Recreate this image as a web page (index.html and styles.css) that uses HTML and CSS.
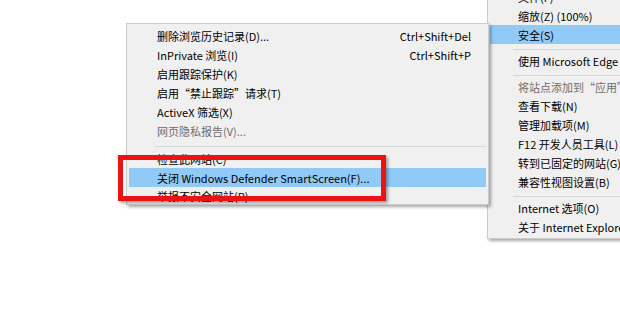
FILE: index.html
```html
<!DOCTYPE html>
<html lang="zh-CN">
<head>
<meta charset="utf-8">
<title>安全菜单</title>
<link rel="stylesheet" href="styles.css">
</head>
<body>
<div class="canvas">
  <div class="menu main-menu">
    <div class="item">文件(F)</div>
    <div class="item">缩放(Z) (100%)</div>
    <div class="item active">安全(S)</div>
    <div class="sep"></div>
    <div class="item">使用 Microsoft Edge 打开(E)</div>
    <div class="sep"></div>
    <div class="item disabled">将站点添加到“应用”视图(I)</div>
    <div class="item">查看下载(N)</div>
    <div class="item">管理加载项(M)</div>
    <div class="item">F12 开发人员工具(L)</div>
    <div class="item">转到已固定的网站(G)</div>
    <div class="item">兼容性视图设置(B)</div>
    <div class="sep"></div>
    <div class="item">Internet 选项(O)</div>
    <div class="item">关于 Internet Explorer(A)</div>
  </div>

  <div class="menu sub-menu">
    <div class="item"><span>删除浏览历史记录(D)...</span><span class="key">Ctrl+Shift+Del</span></div>
    <div class="item"><span>InPrivate 浏览(I)</span><span class="key">Ctrl+Shift+P</span></div>
    <div class="item"><span>启用跟踪保护(K)</span></div>
    <div class="item"><span>启用“禁止跟踪”请求(T)</span></div>
    <div class="item"><span>ActiveX 筛选(X)</span></div>
    <div class="item disabled"><span>网页隐私报告(V)...</span></div>
    <div class="sep tall"></div>
    <div class="item"><span>检查此网站(C)</span></div>
    <div class="item active"><span>关闭 Windows Defender SmartScreen(F)...</span></div>
    <div class="item last"><span>举报不安全网站(R)</span></div>
  </div>

  <div class="mark"></div>
</div>
</body>
</html>
```

FILE: styles.css
```css
html, body {
  margin: 0;
  padding: 0;
  background: #ffffff;
}

.canvas {
  position: relative;
  width: 620px;
  height: 309px;
  overflow: hidden;
  font-family: "Noto Sans CJK SC", "Noto Sans", sans-serif;
  font-size: 11px;
  color: #000000;
}

.menu {
  position: absolute;
  background: #f0f0f0;
  border: 1px solid #cccccc;
  box-shadow: 2px 2px 3px rgba(0, 0, 0, 0.35);
  padding: 2px;
  box-sizing: border-box;
}

.item {
  height: 19px;
  display: flex;
  align-items: center;
  justify-content: space-between;
  padding: 0 15px 0 28px;
  white-space: nowrap;
  box-sizing: border-box;
}

.item.active {
  background: #91c9f7;
}

.item.disabled {
  color: #6d6d6d;
}

.sep {
  height: 7px;
  display: flex;
  flex-direction: column;
  justify-content: flex-end;
  padding-left: 23px;
  box-sizing: border-box;
}

.sep::before {
  content: "";
  display: block;
  height: 1px;
  background: #d7d7d7;
  margin-bottom: 1px;
}

.sep.tall {
  height: 9px;
  padding-left: 26px;
}

.sep.tall::before {
  margin-bottom: 2px;
}

.main-menu {
  left: 487px;
  top: -16px;
  width: 220px;
  z-index: 1;
}

.sub-menu {
  left: 126px;
  top: 23px;
  width: 363px;
  padding-bottom: 0;
  z-index: 2;
}

.sub-menu .item.last {
  height: 17px;
  align-items: flex-start;
  padding-top: 1px;
}

.key {
  margin-left: 20px;
}

.mark {
  position: absolute;
  left: 118px;
  top: 155px;
  width: 268px;
  height: 46px;
  box-sizing: border-box;
  border: 5px solid #ee1111;
  box-shadow: 2px 2px 3px rgba(0, 0, 0, 0.35);
  z-index: 3;
}
```
